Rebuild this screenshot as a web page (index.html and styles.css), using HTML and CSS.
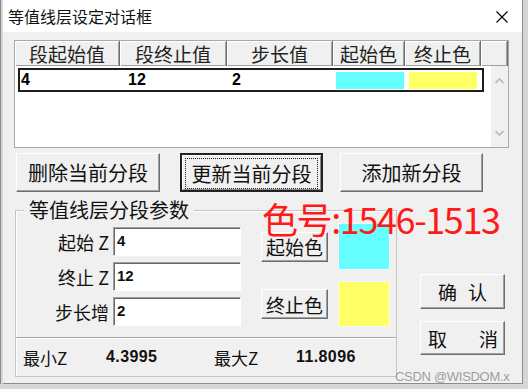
FILE: index.html
```html
<!DOCTYPE html>
<html lang="zh-CN">
<head>
    <meta charset="UTF-8">
    <title>等值线层设定对话框</title>
    <link rel="stylesheet" href="styles.css">
</head>
<body>
    <div class="dialog">
        <div class="titlebar">
            <span class="title">等值线层设定对话框</span>
            <svg class="close" width="12" height="12" viewBox="0 0 12 12">
                <path d="M0.5 0.5 L11.5 11.5 M11.5 0.5 L0.5 11.5" stroke="#000" stroke-width="1.1" fill="none"/>
            </svg>
        </div>

        <div class="content">
            <div class="listctrl">
                <div class="lc-head">
                    <div class="hcell h1">段起始值</div>
                    <div class="hcell h2">段终止值</div>
                    <div class="hcell h3">步长值</div>
                    <div class="hcell h4">起始色</div>
                    <div class="hcell h5">终止色</div>
                    <div class="hcell h6"></div>
                </div>
                <div class="lc-main">
                    <div class="lc-rows">
                        <div class="lc-row selected">
                            <span class="val">4</span>
                            <span class="val">12</span>
                            <span class="val">2</span>
                            <span class="swatch-cell"><i class="chip cyan"></i></span>
                            <span class="swatch-cell"><i class="chip yellow"></i></span>
                        </div>
                    </div>
                    <div class="vscroll">
                        <svg width="9" height="6" viewBox="0 0 9 6"><path d="M0.5 5 L4.5 1 L8.5 5" stroke="#b0b0b0" stroke-width="1.3" fill="none"/></svg>
                        <svg width="9" height="6" viewBox="0 0 9 6"><path d="M0.5 1 L4.5 5 L8.5 1" stroke="#b0b0b0" stroke-width="1.3" fill="none"/></svg>
                    </div>
                </div>
            </div>

            <div class="btnrow">
                <button class="btn seg-del">删除当前分段</button>
                <button class="btn seg-upd default"><span class="focus">更新当前分段</span></button>
                <button class="btn seg-add">添加新分段</button>
            </div>

            <div class="lower">
                <div class="group">
                    <div class="group-title">等值线层分段参数</div>
                    <div class="params">
                        <div class="fields">
                            <div class="field"><label>起始 Z</label><div class="edit">4</div></div>
                            <div class="field"><label>终止 Z</label><div class="edit">12</div></div>
                            <div class="field"><label>步长增</label><div class="edit">2</div></div>
                        </div>
                        <div class="colors">
                            <div class="color-row first">
                                <button class="btn small">起始色</button>
                                <div class="swatch cyan"></div>
                            </div>
                            <div class="color-row second">
                                <button class="btn small">终止色</button>
                                <div class="swatch yellow"></div>
                            </div>
                        </div>
                    </div>
                    <div class="sep"></div>
                    <div class="range">
                        <span class="cap">最小Z</span>
                        <span class="num">4.3995</span>
                        <span class="cap">最大Z</span>
                        <span class="num">11.8096</span>
                    </div>
                </div>
                <div class="side">
                    <button class="btn side-btn ok"><span>确</span><span>认</span></button>
                    <button class="btn side-btn cancel"><span>取</span><span>消</span></button>
                </div>
            </div>
        </div>

        <div class="stamp">色号:1546-1513</div>
        <div class="watermark">CSDN @WISDOM.x</div>
    </div>
</body>
</html>
```

FILE: styles.css
```css
body {
    margin: 0;
    background-color: #d6d6d6;
    border-left: 1px solid #8a8a8a;
    font-family: "Noto Sans CJK SC", "Liberation Sans", sans-serif;
    color: #111;
}
.dialog {
    position: relative;
    box-sizing: border-box;
    margin-left: 2px;
    width: 520px;
    height: 384px;
    background-color: #f0f0f0;
    border-right: 1px solid #8c8c8c;
    border-bottom: 1px solid #8c8c8c;
}
.titlebar {
    height: 32px;
    background-color: #fff;
    display: flex;
    align-items: center;
    justify-content: space-between;
    padding: 0 14px 0 5px;
}
.title {
    font-size: 16px;
    line-height: 20px;
}
.close {
    margin-top: 2px;
}
.content {
    padding: 8px 0 0 11px;
}

/* list control */
.listctrl {
    box-sizing: border-box;
    width: 495px;
    height: 108px;
    border: 1px solid #a8a8a8;
    background-color: #fff;
}
.lc-head {
    display: flex;
    height: 25px;
}
.hcell {
    box-sizing: border-box;
    height: 25px;
    background-color: #f0f0f0;
    border-right: 1px solid #6e6e6e;
    box-shadow: inset 1px 1px #fff, inset -1px -1px #a0a0a0;
    font-size: 19px;
    line-height: 25px;
    text-align: center;
    color: #222;
}
.h1 { width: 105px; }
.h2 { width: 107px; }
.h3 { width: 106px; }
.h4 { width: 72px; }
.h5 { width: 76px; }
.h6 { width: 27px; }
.lc-main {
    display: flex;
    height: 81px;
}
.lc-rows {
    flex: 1;
    padding: 2px 0 0 3px;
}
.lc-row {
    box-sizing: border-box;
    width: 466px;
    height: 24px;
    display: grid;
    grid-template-columns: 107px 104px 104px 73px 1fr;
    align-items: center;
}
.lc-row.selected {
    border: 2px solid #1e1e1e;
}
.val {
    padding-left: 1px;
    font-family: "Liberation Sans", sans-serif;
    font-weight: bold;
    font-size: 16px;
    line-height: 20px;
    color: #000;
}
.swatch-cell {
    padding-left: 1px;
    height: 20px;
    display: flex;
    align-items: center;
}
.chip {
    display: block;
    width: 68px;
    height: 17px;
}
.cyan { background-color: #66ffff; }
.yellow { background-color: #ffff66; }
.vscroll {
    width: 17px;
    background-color: #f0f0f0;
    display: flex;
    flex-direction: column;
    justify-content: space-between;
    align-items: center;
    padding: 12px 0 11px;
    box-sizing: border-box;
}

/* buttons */
.btn {
    box-sizing: border-box;
    background-color: #f0f0f0;
    border: 1px solid;
    border-color: #fff #6e6e6e #6e6e6e #fff;
    box-shadow: inset -1px -1px #a0a0a0;
    font-family: "Noto Sans CJK SC", sans-serif;
    font-size: 19px;
    color: #111;
    padding: 0;
    cursor: pointer;
}
.btnrow {
    display: flex;
    margin: 5px 0 0 2px;
    height: 39px;
}
.btnrow .btn {
    height: 39px;
    font-size: 20px;
}
.seg-del { width: 144px; }
.seg-upd { width: 143px; margin-left: 20px; }
.seg-add { width: 143px; margin-left: 17px; }
.btn.default {
    border: 2px solid #222;
    box-shadow: inset 1px 1px #fff, inset -1px -1px #8a8a8a;
    padding: 3px;
}
.focus {
    display: flex;
    align-items: center;
    justify-content: center;
    height: 100%;
    border: 1px dotted #222;
}

/* lower part */
.lower {
    display: flex;
    margin-top: 18px;
}
.group {
    box-sizing: border-box;
    width: 382px;
    height: 167px;
    margin-left: 1px;
    border: 1px solid #c4c4c4;
    box-shadow: inset 1px 1px #fff;
}
.group-title {
    width: fit-content;
    margin: -13px 0 0 8px;
    padding: 0 5px;
    background-color: #f0f0f0;
    font-size: 20px;
    line-height: 24px;
}
.params {
    display: flex;
    align-items: flex-start;
}
.fields {
    display: flex;
    flex-direction: column;
    gap: 6px;
    margin-top: 5px;
}
.field {
    display: flex;
    align-items: center;
    height: 29px;
}
.field label {
    width: 93px;
    padding-right: 4px;
    text-align: right;
    font-size: 18px;
}
.edit {
    box-sizing: border-box;
    width: 128px;
    height: 29px;
    background-color: #fff;
    border: 1px solid;
    border-color: #a0a0a0 #fff #fff #a0a0a0;
    box-shadow: inset 1px 1px #696969;
    padding: 2px 0 0 3px;
    font-family: "Liberation Sans", sans-serif;
    font-weight: bold;
    font-size: 15px;
    line-height: 22px;
}
.colors {
    margin: 1px 0 0 20px;
}
.color-row {
    display: flex;
    align-items: center;
    gap: 10px;
}
.color-row.second {
    margin-top: 11px;
}
.btn.small {
    width: 67px;
    height: 30px;
}
.swatch {
    box-sizing: border-box;
    width: 52px;
    border: 1px solid #f8f8f8;
}
.first .swatch { height: 47px; }
.second .swatch { height: 46px; }
.sep {
    margin-top: 10px;
    border-top: 1px solid #a8a8a8;
    border-bottom: 1px solid #fff;
}
.range {
    display: grid;
    grid-template-columns: 83px 108px 82px auto;
    align-items: center;
    height: 36px;
    padding-left: 7px;
}
.cap {
    font-size: 17px;
}
.num {
    font-family: "Liberation Sans", sans-serif;
    font-weight: bold;
    font-size: 16px;
    letter-spacing: 0.4px;
}
.side {
    display: flex;
    flex-direction: column;
    margin: 64px 0 0 23px;
}
.side-btn {
    width: 85px;
    display: flex;
    align-items: center;
}
.ok {
    height: 35px;
    justify-content: center;
    gap: 11px;
}
.cancel {
    height: 34px;
    margin-top: 12px;
    justify-content: space-between;
    padding: 0 6px 0 7px;
}

/* overlays */
.stamp {
    position: absolute;
    left: 259px;
    top: 195px;
    font-size: 36px;
    line-height: 46px;
    letter-spacing: -1.4px;
    color: #ff1a1a;
    font-family: "Noto Sans CJK SC", "Liberation Sans", sans-serif;
}
.watermark {
    position: absolute;
    left: 392px;
    top: 369px;
    font-family: "Liberation Sans", sans-serif;
    font-size: 13px;
    letter-spacing: -0.3px;
    color: rgba(140, 140, 140, 0.85);
}
```
